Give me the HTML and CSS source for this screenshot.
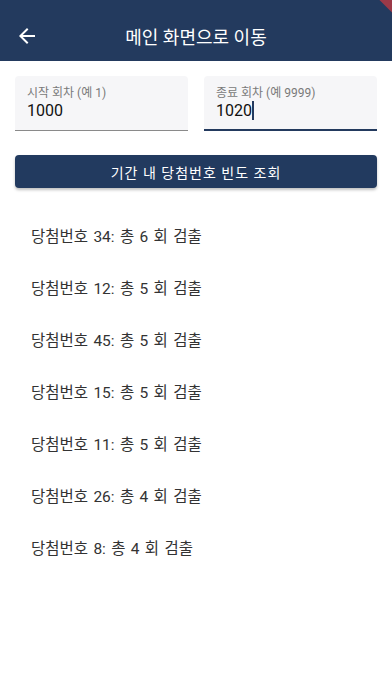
FILE: index.html
```html
<!DOCTYPE html>
<html lang="ko">
<head>
<meta charset="utf-8">
<link rel="stylesheet" href="styles.css">
</head>
<body>
<div class="app">
  <header class="appbar">
    <svg class="back" viewBox="0 0 24 24" width="24" height="24"><path d="M20 11H7.83l5.59-5.59L12 4l-8 8 8 8 1.41-1.41L7.83 13H20v-2z" fill="#fff"/></svg>
    <div class="title">메인 화면으로 이동</div>
  </header>
  <div class="banner"></div>
  <main class="content">
    <div class="fields">
      <div class="field">
        <div class="label">시작 회차 (예 1)</div>
        <div class="value">1000</div>
      </div>
      <div class="field focused">
        <div class="label">종료 회차 (예 9999)</div>
        <div class="value">1020<span class="caret"></span></div>
      </div>
    </div>
    <button class="btn">기간 내 당첨번호 빈도 조회</button>
    <ul class="list">
      <li>당첨번호 34: 총 6 회 검출</li>
      <li>당첨번호 12: 총 5 회 검출</li>
      <li>당첨번호 45: 총 5 회 검출</li>
      <li>당첨번호 15: 총 5 회 검출</li>
      <li>당첨번호 11: 총 5 회 검출</li>
      <li>당첨번호 26: 총 4 회 검출</li>
      <li>당첨번호 8: 총 4 회 검출</li>
    </ul>
  </main>
</div>
</body>
</html>
```
FILE: styles.css
```css
* { box-sizing: border-box; }
html, body { margin: 0; padding: 0; background: #fff; }
body {
  font-family: Roboto, "Noto Sans CJK KR", sans-serif;
  width: 392px;
  height: 696px;
  overflow: hidden;
}
.app { position: relative; width: 392px; height: 696px; }
.appbar {
  height: 61px;
  background: #233a5e;
  display: flex;
  align-items: center;
  padding: 10px 0 0 15px;
}
.back { display: block; flex: none; }
.title {
  flex: 1;
  text-align: center;
  color: #fff;
  font-size: 18px;
  margin-right: 39px;
}
.banner {
  position: absolute;
  top: -6px;
  right: -16px;
  width: 40px;
  height: 12px;
  background: #b03a44;
  transform: rotate(45deg);
  opacity: 0.85;
}
.content { padding: 15px 15px 0 15px; }
.fields { display: flex; gap: 16px; }
.field {
  flex: 1;
  height: 55px;
  background: #f6f6f8;
  border-radius: 4px 4px 0 0;
  border-bottom: 1px solid #8a8a8a;
  padding: 9px 12px 0 12px;
}
.field.focused { border-bottom: 2px solid #233a5e; }
.label { font-size: 12px; color: #7a7a7a; line-height: 16px; }
.value { font-size: 16px; color: #111; line-height: 20px; margin-top: 0; }
.caret {
  display: inline-block;
  width: 2px;
  height: 19px;
  background: #233a5e;
  vertical-align: -4px;
}
.btn {
  display: block;
  width: 100%;
  height: 33px;
  margin-top: 24px;
  border: none;
  border-radius: 4px;
  background: #223a5f;
  color: #fff;
  font-family: inherit;
  font-size: 14px;
  letter-spacing: 1px;
  box-shadow: 0 2px 3px rgba(0,0,0,0.25);
}
.list { list-style: none; margin: 23px 0 0 0; padding: 0 0 0 16px; }
.list li {
  height: 52px;
  font-size: 15.5px;
  line-height: 52px;
  color: #333;
  word-spacing: 1.5px;
}
```
